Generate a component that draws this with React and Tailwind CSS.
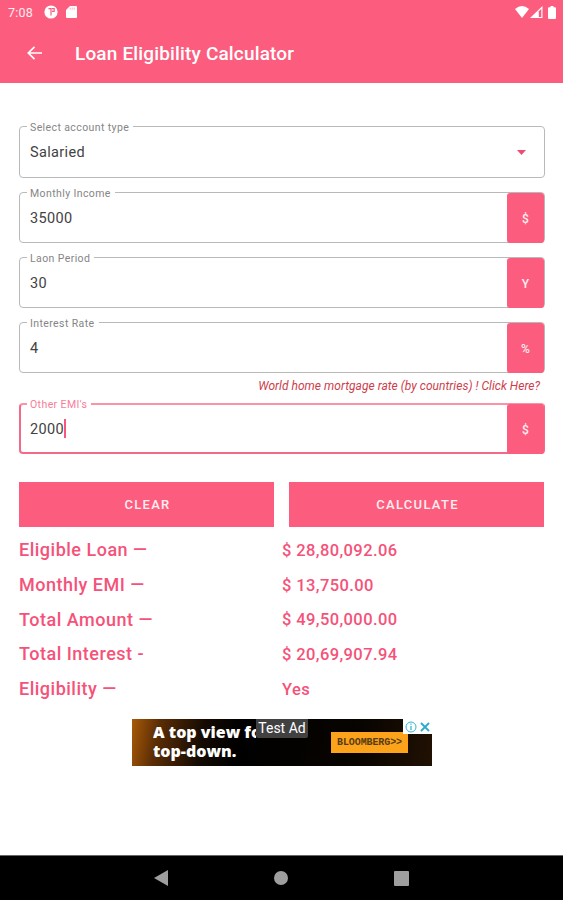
function StatusBar() {
  return (
    <div className="flex h-6 items-center pl-2 pr-[7px] text-white">
      <span className="w-[36px] pt-px text-[12.5px] leading-6 tracking-[0.2px] text-white/90">7:08</span>
      <svg className="h-[14px] w-[14px]" viewBox="0 0 14 14">
        <circle cx="7" cy="7" r="6.6" fill="#fff" />
        <path d="M4.500 3.700h2.500v6.800M7.900 3.700h2.300v2.600H7.900" fill="none" stroke="#fc5c7d" strokeWidth="1.200" />
      </svg>
      <svg className="ml-2 h-3 w-[11px]" viewBox="0 0 11 12">
        <path d="M4 0h6q1 0 1 1v10q0 1-1 1H1q-1 0-1-1V4z" fill="#fff" />
        <path d="M4.2 1.6v2M6.2 1.6v2M8.2 1.6v2" stroke="#fc5c7d" strokeWidth=".5" />
      </svg>
      <svg className="ml-auto h-3 w-[14px]" viewBox="0 0 14 12">
        <path d="M0 3Q7-3 14 3L7 12z" fill="#fff" />
      </svg>
      <svg className="ml-[1px] h-3 w-[13px]" viewBox="0 0 13 12">
        <path d="M0 12L12.500 0v12z" fill="#fff" />
        <path d="M8.800 5.200l2.500-2.400v8.100H8.800z" fill="#fc5c7d" />
      </svg>
      <svg className="ml-[5px] h-[13px] w-2" viewBox="0 0 8 13">
        <path d="M2.500 0h3v1.300H7q1 0 1 1V12q0 1-1 1H1q-1 0-1-1V2.300q0-1 1-1h1.500z" fill="#fff" />
      </svg>
    </div>
  );
}

function Field({ label, value, suffix, tall, active }) {
  return (
    <div
      className={`relative flex items-center rounded-[4px] ${tall ? "h-[52px]" : "h-[51px]"} ${
        active
          ? "border-2 border-r border-x-[#f46a86] border-b-[#f46a86] border-t-[#fa93a6] pl-[9px]"
          : "border border-[#b9b9b9] pl-[10px]"
      }`}
    >
      <span
        className={`absolute whitespace-nowrap bg-white pl-[3px] pr-1 text-[10.5px] leading-3 tracking-[0.4px] ${
          active ? "-top-[6px] left-[6px] text-[#f77c98]" : "-top-[5px] left-[7px] text-[#858585]"
        }`}
      >
        {label}
      </span>
      <span className={`text-[14.5px] tracking-[0.35px] text-[#424242] ${tall ? "pt-px" : "pt-[3px]"}`}>{value}</span>
      {active && <span className="h-[19px] w-[1.500px] bg-[#f7577a]" />}
      {suffix ? (
        <span className="-my-[2px] ml-auto flex h-[50px] w-[37px] items-center justify-center rounded-[3px] bg-[#fc5c7d] pt-[2px] text-[12px] font-medium text-white/90">
          {suffix}
        </span>
      ) : (
        <svg className="ml-auto mr-[18px] h-[5px] w-[9px]" viewBox="0 0 9 5">
          <path d="M0 0h9L4.500 5z" fill="#ef4c73" />
        </svg>
      )}
    </div>
  );
}

const results = [
  ["Eligible Loan —", "$ 28,80,092.06"],
  ["Monthly EMI —", "$ 13,750.00"],
  ["Total Amount —", "$ 49,50,000.00"],
  ["Total Interest -", "$ 20,69,907.94"],
  ["Eligibility —", "Yes"],
];

function AdBanner() {
  return (
    <div className="relative mx-auto mt-[13px] flex h-[47px] w-[300px] bg-[linear-gradient(100deg,#a85a08_0%,#5b2d05_9%,#140a02_24%,#000_36%,#080400_75%,#211103_100%)]">
      <p className="ml-[21px] mt-[4px] w-[103px] overflow-hidden whitespace-nowrap text-[16px] font-extrabold leading-[19px] text-white [font-family:'Open_Sans',sans-serif]">
        A top view fo
        <br />
        top-down.
      </p>
      <span className="absolute left-[124px] top-0 h-[19px] w-[52px] rounded-b-[2px] bg-[#414141] text-center text-[14px] leading-[19px] text-white">
        Test Ad
      </span>
      <span className="absolute left-[199px] top-[13px] flex h-[21px] w-[77px] items-center justify-center bg-[#fca31b] font-['Liberation_Mono',monospace] text-[10px] font-bold tracking-[-0.1px] text-[#583b10]">
        BLOOMBERG&gt;&gt;
      </span>
      <span className="absolute right-0 top-0 flex h-[15px] w-[29px] items-center justify-around bg-white">
        <svg className="h-3 w-3" viewBox="0 0 12 12" fill="none" stroke="#35b5d4">
          <circle cx="6" cy="6" r="5" />
          <path d="M6 5v4M6 2.500v1.300" strokeWidth="1.300" />
        </svg>
        <svg className="h-[10px] w-[10px]" viewBox="0 0 10 10" fill="none" stroke="#2aaace" strokeWidth="1.800">
          <path d="M1 1l8 8M9 1L1 9" />
        </svg>
      </span>
    </div>
  );
}

export default function App() {
  return (
    <div className="flex h-[900px] w-[563px] flex-col overflow-hidden bg-white font-['Roboto','Liberation_Sans',sans-serif]">
      <header className="h-[83px] bg-[#fc5c7d]">
        <StatusBar />
        <div className="flex h-[59px] items-center pl-[27px] text-white">
          <svg className="-mt-px h-[14px] w-[15px]" viewBox="0 0 15 14" fill="none" stroke="#fff" strokeWidth="1.700">
            <path d="M15 7H1.500M7.500 .8L1.300 7l6.200 6.200" />
          </svg>
          <h1 className="ml-[33px] pt-px text-[19px] font-medium leading-6 tracking-[0.16px]">Loan Eligibility Calculator</h1>
        </div>
      </header>

      <main className="flex-1 pl-[19px] pr-[18px] pt-[43px]">
        <Field label="Select account type" value="Salaried" tall />
        <div className="mt-[14px] flex flex-col gap-[14px]">
          <Field label="Monthly Income" value="35000" suffix="$" />
          <Field label="Laon Period" value="30" suffix="Y" />
          <Field label="Interest Rate" value="4" suffix="%" />
        </div>
        <p className="h-[30px] pr-[5px] pt-[5px] text-right text-[12px] italic leading-4 tracking-[0.03px] text-[#cd3e4c]">
          World home mortgage rate (by countries) ! Click Here?
        </p>
        <Field label="Other EMI's" value="2000" suffix="$" active />
        <div className="mt-[28px] grid grid-cols-2 gap-[15px] pr-px">
          {["CLEAR", "CALCULATE"].map((name) => (
            <button key={name} className="h-[45px] bg-[#fc5c7d] pl-[2px] text-[13px] font-medium tracking-[1.300px] text-white/90">
              {name}
            </button>
          ))}
        </div>
        <div className="mt-[6px] text-[#f5527a]">
          {results.map(([name, value]) => (
            <div key={name} className="grid h-[34.700px] grid-cols-2 items-center font-medium">
              <span className="-mt-px text-[18px] tracking-[0.5px]">{name}</span>
              <span className="pt-[2px] text-[16.500px] tracking-[0.4px]">{value}</span>
            </div>
          ))}
        </div>
        <AdBanner />
      </main>

      <nav className="flex h-[45px] items-center justify-between border-t border-[#666] bg-black pl-[154px] pr-[154px]">
        <svg className="h-4 w-[14px]" viewBox="0 0 14 16">
          <path d="M14 0v16L0 8z" fill="#9e9e9e" />
        </svg>
        <span className="h-[14px] w-[14px] rounded-full bg-[#9e9e9e]" />
        <span className="h-[15px] w-[15px] rounded-[1px] bg-[#9e9e9e]" />
      </nav>
    </div>
  );
}
